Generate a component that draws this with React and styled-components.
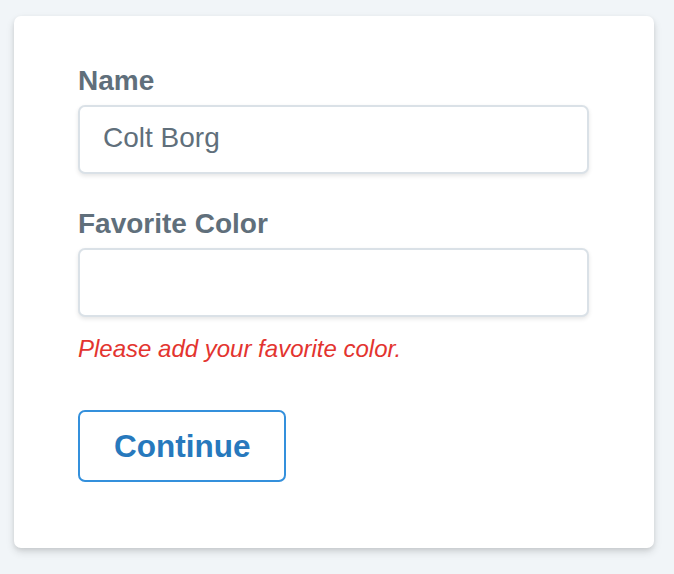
import styled, { createGlobalStyle } from "styled-components";
import { useState } from "react";

const Global = createGlobalStyle`
  html, body {
    margin: 0;
    padding: 0;
    background: #f1f5f8;
    font-family: "Liberation Sans", Arial, Helvetica, sans-serif;
  }
  * { box-sizing: border-box; }
`;

const Page = styled.div`
  padding: 16px 20px 20px 14px;
`;

const Card = styled.form`
  width: 640px;
  background: #fff;
  border-radius: 7px;
  box-shadow: 0 4px 8px 0 rgba(0, 0, 0, 0.12), 0 2px 4px 0 rgba(0, 0, 0, 0.08);
  padding: 47px 65px 66px 64px;
  display: flex;
  flex-direction: column;
`;

const Field = styled.div`
  display: flex;
  flex-direction: column;
  margin-bottom: ${({ gap }) => gap}px;
`;

const Label = styled.label`
  font-size: 28px;
  line-height: 35px;
  font-weight: 700;
  color: #606f7b;
  margin-bottom: 7px;
`;

const Input = styled.input`
  width: 100%;
  height: 69px;
  border: 2px solid #dae1e7;
  border-radius: 7px;
  box-shadow: 0 2px 4px 0 rgba(0, 0, 0, 0.1);
  padding: 0 23px 4px;
  font-family: inherit;
  font-size: 28px;
  color: #606f7b;
  background: #fff;
  outline: none;
`;

const Error = styled.p`
  margin: 17px 0 0;
  font-size: 24px;
  line-height: 30px;
  font-style: italic;
  color: #e3342f;
`;

const Button = styled.button`
  align-self: flex-start;
  height: 72px;
  padding: 0 34px;
  border: 2px solid #3490dc;
  border-radius: 7px;
  background: #fff;
  color: #2779bd;
  font-family: inherit;
  font-size: 31.5px;
  font-weight: 700;
  cursor: pointer;
`;

export default function App() {
  const [name, setName] = useState("Colt Borg");
  const [color, setColor] = useState("");

  return (
    <Page>
      <Global />
      <Card onSubmit={(e) => e.preventDefault()}>
        <Field gap={32}>
          <Label htmlFor="name">Name</Label>
          <Input id="name" value={name} onChange={(e) => setName(e.target.value)} />
        </Field>
        <Field gap={46}>
          <Label htmlFor="color">Favorite Color</Label>
          <Input id="color" value={color} onChange={(e) => setColor(e.target.value)} />
          <Error>Please add your favorite color.</Error>
        </Field>
        <Button type="submit">Continue</Button>
      </Card>
    </Page>
  );
}
